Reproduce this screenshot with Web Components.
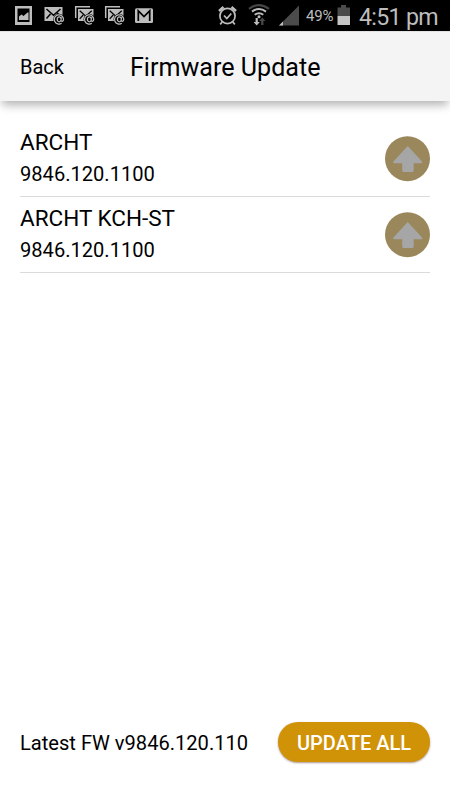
<!DOCTYPE html>
<html lang="en">
<head>
<meta charset="utf-8">
<title>Firmware Update</title>
<style>
    html, body {
        margin: 0;
        height: 100%;
        overflow: hidden;
        background: #fff;
        font-family: Roboto, "Liberation Sans", sans-serif;
        color: #000;
    }
</style>
</head>
<body>
<firmware-app>
    <status-bar slot="status" battery="49%" time="4:51 pm"></status-bar>
    <title-bar slot="header"><span slot="back">Back</span>Firmware Update</title-bar>
    <device-row name="ARCHT">9846.120.1100</device-row>
    <device-row name="ARCHT KCH-ST">9846.120.1100</device-row>
    <update-footer slot="footer">Latest FW v9846.120.110<pill-button slot="action">UPDATE ALL</pill-button></update-footer>
</firmware-app>

<script>
{
    const define = (tag, html, setup) => {
        const template = document.createElement("template");
        template.innerHTML = html;
        customElements.define(tag, class extends HTMLElement {
            constructor() {
                super();
                const root = this.attachShadow({ mode: "open" });
                root.appendChild(template.content.cloneNode(true));
                if (setup) setup(this, root);
            }
        });
    };

    define("firmware-app", `
    <style>
        :host {
            display: flex;
            flex-direction: column;
            width: 450px;
            height: 800px;
        }
        main {
            flex: 1;
            padding: 20px 20px 0;
        }
    </style>
    <slot name="status"></slot>
    <slot name="header"></slot>
    <main><slot></slot></main>
    <slot name="footer"></slot>
    `);

    define("status-bar", `
    <style>
        :host {
            display: flex;
            align-items: flex-start;
            box-sizing: border-box;
            height: 31px;
            flex: none;
            background: #000;
            color: #bdbdbd;
        }
        svg {
            display: block;
            flex: none;
        }
        #battery {
            width: 29px;
            margin-left: 6px;
            padding-top: 8px;
            font-size: 15px;
            line-height: 17px;
            letter-spacing: -0.2px;
            white-space: nowrap;
        }
        #time {
            margin-left: 9px;
            padding-top: 3px;
            font-size: 23.2px;
            line-height: 28px;
            letter-spacing: -0.7px;
            white-space: nowrap;
        }
    </style>
    <svg width="160" height="31" viewBox="0 0 160 31">
        <path fill="#bdbdbd" fill-rule="evenodd" d="M15 6h17v19H15zM17.500 8.500v13.500h12V8.500z"/>
        <path fill="#bdbdbd" d="M19 20v-3.500l2.500-2 2 1.500 4-3.500h1v7.500z"/>
        <defs>
            <g id="mail">
                <path fill="#bdbdbd" d="M0 0h18v8.500h-5l-4 5.500H0z"/>
                <path fill="none" stroke="#000" stroke-width="1.500" d="M2 2l7 6.300L16 2M2 11.500l4-4.500M15 8l-3-2.500"/>
            </g>
            <g id="at">
                <circle r="5.600" fill="#000"/>
                <path fill="none" stroke="#bdbdbd" stroke-width="1.250" d="M2.600 3.900A4.600 4.600 0 1 1 4.500 .3C4.300 2.400 1.900 2.600 2 .8L2.300-2M2 0A1.900 2 0 1 1-1.700 0A1.900 2 0 1 1 2 0"/>
            </g>
        </defs>
        <use href="#mail" x="44.500" y="7"/>
        <use href="#at" x="59" y="19.300"/>
        <path fill="none" stroke="#bdbdbd" stroke-width="1.500" d="M75.700 18V6.700H90M105.700 18V6.700H120"/>
        <use href="#mail" transform="translate(78 9) scale(.86)"/>
        <use href="#at" x="89.200" y="19.300"/>
        <use href="#mail" transform="translate(108 9) scale(.86)"/>
        <use href="#at" x="119.200" y="19.300"/>
        <rect x="135" y="8.200" width="18" height="14.800" rx="1.500" fill="#bdbdbd"/>
        <path fill="none" stroke="#000" stroke-width="1.700" d="M138.300 21V10.800l5.700 5.700 5.700-5.700V21"/>
    </svg>
    <svg width="140" height="31" viewBox="160 0 140 31">
        <g fill="none" stroke="#bdbdbd">
            <circle cx="227.500" cy="16" r="7.600" stroke-width="1.700"/>
            <path stroke-width="1.700" d="M224 15.500l2.800 3 4.500-5M222.200 22l-2 2.400M232.800 22l2 2.400"/>
            <path stroke-width="2.500" d="M219 11l4.500-4M236 11l-4.500-4"/>
            <path stroke="#444" stroke-width="2.200" d="M249 8.800Q259 1.300 269 8.800"/>
            <path stroke-width="2" d="M252 11.600Q259 6.300 266 11.600M254.700 14.800Q259 11.700 263.300 14.800"/>
        </g>
        <circle cx="259" cy="16.800" r="1.500" fill="#bdbdbd"/>
        <path fill="#bdbdbd" d="M255.600 18h2.200v4h2l-3.100 3.500-3.100-3.500h2z"/>
        <path fill="#4b4b4b" d="M261.200 25h2.200v-4h2l-3.100-3.500-3.100 3.500h2z"/>
        <path fill="#4b4b4b" d="M299 5.500V25.500H279z"/>
        <path fill="#bdbdbd" d="M283 21.500v4h-4z"/>
    </svg>
    <span id="battery"></span>
    <svg width="15" height="31" viewBox="335 0 15 31">
        <path fill="#4b4b4b" d="M337.500 7.500h3.500V5h5v2.500h4V16h-12.500z"/>
        <path fill="#c5c5c5" d="M337.500 16H350v9h-12.500z"/>
    </svg>
    <span id="time"></span>
    `, (host, root) => {
        root.getElementById("battery").textContent = host.getAttribute("battery");
        root.getElementById("time").textContent = host.getAttribute("time");
    });

    define("title-bar", `
    <style>
        :host {
            display: grid;
            grid-template-columns: 110px 1fr;
            align-items: center;
            box-sizing: border-box;
            height: 70px;
            flex: none;
            padding: 2px 20px 0;
            background: #f4f4f4;
            border-top: 1px solid #e2e2e2;
            box-shadow: 0 6px 9px -2px rgba(0, 0, 0, .3);
            white-space: nowrap;
        }
        #back {
            padding-bottom: 2px;
            font-size: 20px;
        }
        #title {
            font-size: 25.100px;
        }
    </style>
    <span id="back"><slot name="back"></slot></span>
    <span id="title"><slot></slot></span>
    `);

    define("device-row", `
    <style>
        :host {
            display: flex;
            justify-content: space-between;
            box-sizing: border-box;
            height: 76px;
            border-bottom: 1px solid #dbdbdb;
        }
        #name {
            margin-top: 7px;
            font-size: 22.500px;
            line-height: 28px;
        }
        #version {
            font-size: 20.100px;
            line-height: 36px;
        }
        svg {
            display: block;
            margin-top: 15px;
        }
    </style>
    <div>
        <div id="name"></div>
        <div id="version"><slot></slot></div>
    </div>
    <svg width="45" height="46" viewBox="0 0 45 46">
        <circle cx="22.500" cy="22.700" r="22.500" fill="#9a875b"/>
        <path fill="#a6a6a6" stroke="#a6a6a6" stroke-width="2" stroke-linejoin="round" d="M22.700 11.300L36.300 26.200H27.700V34.500Q27.700 35 27.200 35H18.700Q18.200 35 18.200 34.500V26.200H9.200Z"/>
    </svg>
    `, (host, root) => {
        root.getElementById("name").textContent = host.getAttribute("name");
    });

    define("update-footer", `
    <style>
        :host {
            display: flex;
            align-items: center;
            justify-content: space-between;
            padding: 0 20px 37.700px;
            font-size: 20.100px;
            white-space: nowrap;
        }
        span {
            padding-top: 2px;
        }
    </style>
    <span><slot></slot></span>
    <slot name="action"></slot>
    `);

    define("pill-button", `
    <style>
        :host {
            display: block;
        }
        button {
            display: block;
            width: 152px;
            height: 40px;
            padding: 1px 0 0;
            border: none;
            border-radius: 20px;
            background: #d09207;
            box-shadow: 0 1px 2px rgba(90, 45, 30, .5);
            color: #fff;
            font: 500 20px Roboto, "Liberation Sans", sans-serif;
        }
    </style>
    <button><slot></slot></button>
    `);
}
</script>
</body>
</html>
